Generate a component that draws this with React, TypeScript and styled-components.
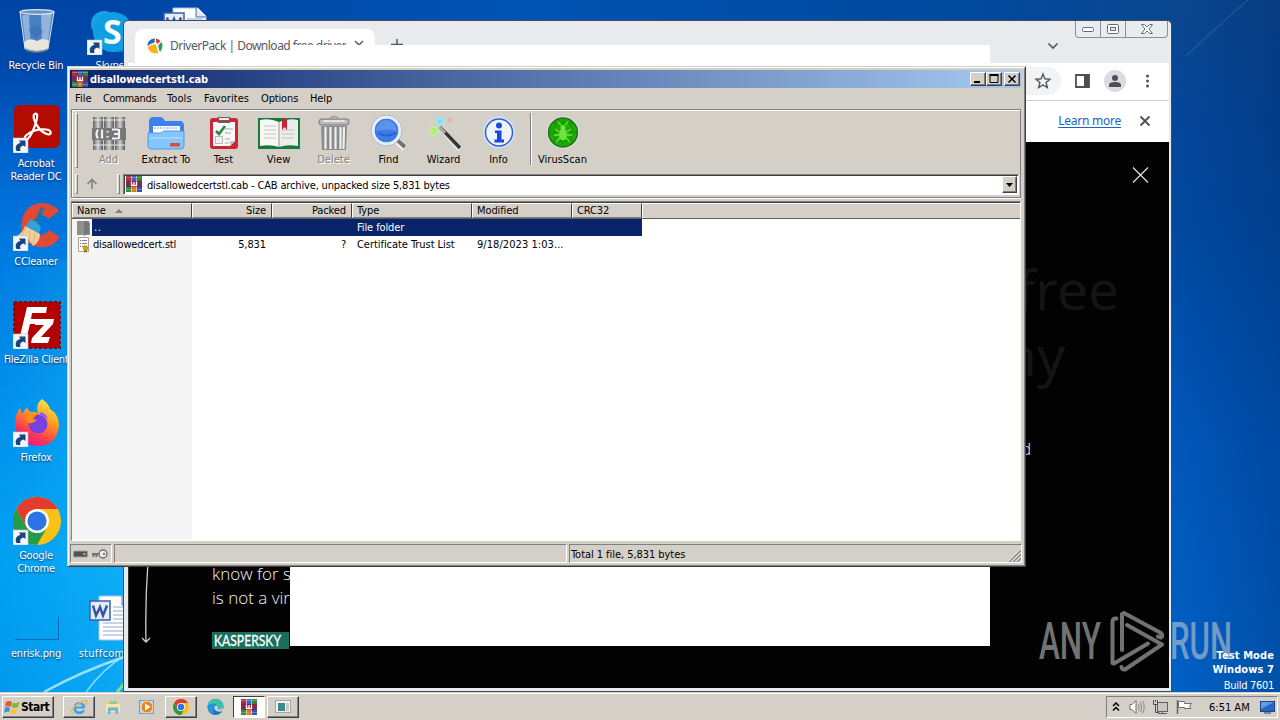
import styled, { createGlobalStyle, css } from "styled-components";
import type { ReactNode } from "react";

const GlobalStyle = createGlobalStyle`
    * {
        box-sizing: border-box;
    }
    body {
        margin: 0;
        overflow: hidden;
        font-family: "DejaVu Sans Condensed", "DejaVu Sans", sans-serif;
        font-size: 11px;
        line-height: 13px;
        color: #000;
    }
    svg {
        display: block;
        flex: none;
    }
`;

const Desktop = styled.div`
    position: relative;
    width: 1280px;
    height: 720px;
    overflow: hidden;
    background:
        linear-gradient(90deg, #0046a6 0, #0053b2 400px, #004a9f 800px, #0a468f 1048px) 124px 0 / 1048px 24px no-repeat,
        linear-gradient(90deg, rgba(0, 30, 80, 0) 1172px, rgba(0, 30, 80, 0.25) 1280px),
        linear-gradient(180deg, #0a468f 0, #04469a 120px, #00499f 220px, #0057bb 440px, #0062c6 700px) right / 108px 100% no-repeat,
        linear-gradient(90deg, rgba(0, 190, 255, 0) 0, rgba(40, 200, 255, 0.35) 130px, rgba(0, 0, 0, 0) 131px) 0 260px no-repeat,
        linear-gradient(180deg, #0045a4 0, #0048ab 60px, #0062cc 150px, #0079df 240px, #0090ec 400px, #02a0f2 560px, #0098ee 700px);
`;

const Rays = styled.svg`
    position: absolute;
    inset: 0;
`;

const IconGrid = styled.div`
    display: grid;
    grid-template-columns: repeat(3, 74px);
    grid-template-rows: repeat(7, 98px);
    padding-top: 7px;
`;

const Shortcut = styled.div<{ $col: number; $row: number }>`
    grid-column: ${(props) => props.$col};
    grid-row: ${(props) => props.$row};
    display: flex;
    flex-direction: column;
    align-items: center;
    gap: 4px;
`;

const ShortcutLabel = styled.span<{ $ls?: number }>`
    padding-right: 2px;
    color: #fff;
    text-align: center;
    white-space: pre;
    letter-spacing: ${(props) => props.$ls ?? -0.2}px;
    text-shadow: 0 1px 2px rgba(0, 20, 60, 0.8);
`;

/* ---------- browser window ---------- */

const BrowserWindow = styled.div`
    position: absolute;
    left: 123px;
    top: 20px;
    width: 1049px;
    height: 672px;
    display: flex;
    flex-direction: column;
    padding: 0 2px 3px 4px;
    border: 1px solid #3d4c5c;
    border-radius: 5px 5px 0 0;
    background: #e8eaed;
    overflow: hidden;
`;

const TabStrip = styled.div`
    display: flex;
    height: 42px;
    padding: 8px 0 0 7px;
    flex: none;
`;

const Tab = styled.div`
    display: flex;
    align-items: flex-start;
    width: 240px;
    height: 34px;
    padding: 9px 11px 0 12px;
    border-radius: 8px 8px 0 0;
    background: #fff;
`;

const TabTitle = styled.span`
    width: 176px;
    margin-left: 7px;
    overflow: hidden;
    white-space: nowrap;
    font-family: "Noto Sans", sans-serif;
    font-size: 12px;
    line-height: 15px;
    letter-spacing: -0.5px;
    color: #55595e;
`;

const TabClose = styled.div`
    margin-left: 8px;
    padding-top: 2px;
`;

const NewTab = styled.div`
    padding: 10px 0 0 16px;
`;

const TabSearch = styled.div`
    margin-left: auto;
    padding: 13px 110px 0 0;
`;

const CaptionButtons = styled.div`
    position: absolute;
    top: 0;
    right: 3px;
    display: flex;
    height: 17px;
    border: 1px solid #8b9097;
    border-top: 0;
    border-radius: 0 0 4px 4px;
    background: #e9ecef;
`;

const CaptionButton = styled.div<{ $w: number }>`
    display: flex;
    align-items: center;
    justify-content: center;
    width: ${(props) => props.$w}px;
    border-right: 1px solid #8b9097;

    &:last-child {
        border-right: 0;
    }
`;

const BrowserToolbar = styled.div`
    display: flex;
    align-items: center;
    justify-content: flex-end;
    height: 38px;
    flex: none;
    padding: 0 13px 2px 0;
    gap: 14px;
    background: #fff;
    border-bottom: 1px solid #cfd1d5;
`;

const Omnibox = styled.div`
    display: flex;
    align-items: center;
    justify-content: flex-end;
    width: 400px;
    height: 28px;
    padding-right: 9px;
    border-radius: 14px;
    background: #f1f3f4;
`;

const Avatar = styled.div`
    display: flex;
    width: 22px;
    height: 22px;
    overflow: hidden;
    border-radius: 11px;
    background: #dadce0;
`;

const InfoBar = styled.div`
    display: flex;
    align-items: center;
    justify-content: flex-end;
    gap: 18px;
    height: 41px;
    flex: none;
    padding: 0 18px 2px 0;
    background: #fff;
    font-family: "Noto Sans", sans-serif;
    font-size: 12px;
`;

const LearnMore = styled.span`
    color: #1a62c5;
    text-decoration: underline;
    text-underline-offset: 2px;
    letter-spacing: -0.25px;
`;

const Page = styled.div`
    flex: 1;
    display: flex;
    flex-direction: column;
    border-left: 1px solid #333;
    background: #020202;
    color: #f2f2f2;
    font-family: "Open Sans", sans-serif;
    font-weight: 300;
`;

const PageClose = styled.div`
    display: flex;
    justify-content: flex-end;
    height: 114px;
    padding: 25px 20px 0 0;
`;

const Headline = styled.div`
    display: flex;
    flex-direction: column;
    align-items: flex-end;
    height: 185px;
    font-family: "Noto Sans", sans-serif;
    font-size: 55px;
    font-weight: 400;
    line-height: 66px;
    color: #141414;
`;

const HeadlineText = styled.span<{ $right: number }>`
    margin-right: ${(props) => props.$right}px;
`;

const Caption = styled.div`
    height: 121px;
    padding-right: 138px;
    text-align: right;
    font-size: 17px;
    line-height: 16px;
`;

const Quote = styled.div`
    display: flex;
    gap: 61px;
    padding-left: 10px;
`;

const QuoteText = styled.div`
    font-size: 17px;
    line-height: 24px;
    white-space: pre;
`;

const Kaspersky = styled.div`
    width: 77px;
    height: 17px;
    margin-top: 22px;
    background: #18705b;
`;

const BlankWindow = styled.div`
    position: absolute;
    left: 290px;
    top: 45px;
    width: 700px;
    height: 601px;
    background: #fff;
`;

/* ---------- archive window ---------- */

const raised = css`
    border: 1px solid;
    border-color: #fff #404040 #404040 #fff;
    box-shadow: inset -1px -1px 0 #808080;
`;

const sunken = css`
    border: 1px solid;
    border-color: #808080 #fff #fff #808080;
`;

const ArchiveWindow = styled.div`
    position: absolute;
    left: 67px;
    top: 66px;
    width: 959px;
    height: 501px;
    display: flex;
    flex-direction: column;
    padding: 3px 3px 3px 2px;
    border: 1px solid;
    border-color: #d4d0c8 #404040 #404040 #d4d0c8;
    background: #d4d0c8;
    box-shadow: inset 1px 1px 0 #fff, inset -1px -1px 0 #808080;
`;

const TitleBar = styled.div`
    display: flex;
    align-items: center;
    height: 18px;
    flex: none;
    padding: 0 2px 0 2px;
    background: linear-gradient(90deg, #0a246a, #a6caf0);
    color: #fff;
    font-weight: bold;
`;

const TitleText = styled.span`
    flex: 1;
    padding-left: 2px;
    letter-spacing: -0.05px;
`;

const TitleButton = styled.div<{ $gap?: number }>`
    ${raised}
    display: flex;
    align-items: center;
    justify-content: center;
    width: 16px;
    height: 14px;
    margin-left: ${(props) => props.$gap ?? 0}px;
    background: #d4d0c8;
`;

const MenuBar = styled.div`
    display: flex;
    height: 21px;
    flex: none;
    padding: 4px 0 0 5px;
`;

const MenuItem = styled.span<{ $w: number; $ls?: number }>`
    width: ${(props) => props.$w}px;
    letter-spacing: ${(props) => props.$ls ?? 0}px;
    white-space: nowrap;
`;

const Rebar = styled.div`
    display: flex;
    flex-direction: column;
    height: 89px;
    flex: none;
    margin: 0 1px 0 1px;
    border: 1px solid #808080;
    box-shadow: inset 1px 1px 0 #fff, 0 1px 0 #fff;
`;

const ButtonBand = styled.div`
    display: flex;
    height: 62px;
    padding: 3px 0 0 3px;
`;

const Gripper = styled.div<{ $h: number; $right: number }>`
    width: 3px;
    height: ${(props) => props.$h}px;
    margin-right: ${(props) => props.$right}px;
    border: 1px solid;
    border-color: #fff #808080 #808080 #fff;
`;

const ToolButton = styled.div<{ $w?: number; $disabled?: boolean }>`
    display: flex;
    flex-direction: column;
    align-items: center;
    width: ${(props) => props.$w ?? 55}px;
    white-space: nowrap;
    padding-top: 1px;
    gap: 1px;
    color: ${(props) => (props.$disabled ? "#808080" : "#000")};
    text-shadow: ${(props) => (props.$disabled ? "1px 1px 0 #fff" : "none")};
`;

const ToolSeparator = styled.div`
    width: 2px;
    height: 52px;
    margin: 0 3px 0 4px;
    border-left: 1px solid #808080;
    border-right: 1px solid #fff;
`;

const AddressBand = styled.div`
    display: flex;
    height: 25px;
    padding: 2px 1px 0 3px;
`;

const UpArrow = styled.div`
    width: 36px;
    padding: 4px 0 0 5px;
`;

const AddressBox = styled.div`
    ${sunken}
    display: flex;
    flex: 1;
    height: 21px;
    padding: 1px 1px 1px 2px;
    background: #fff;
    box-shadow: inset 1px 1px 0 #404040;
`;

const AddressText = styled.span`
    flex: 1;
    padding: 3px 0 0 5px;
    letter-spacing: -0.16px;
`;

const DropButton = styled.div`
    ${raised}
    display: flex;
    align-items: center;
    justify-content: center;
    width: 15px;
    height: 17px;
    background: #d4d0c8;
`;

const FileList = styled.div`
    ${sunken}
    display: flex;
    flex-direction: column;
    flex: 1;
    margin: 3px 1px 0 1px;
    box-shadow: inset 0 1px 0 #404040;
    padding-top: 1px;
    background: linear-gradient(90deg, #f5f5f5 120px, #fff 120px);
`;

const HeaderRow = styled.div`
    display: flex;
    height: 16px;
    background: #d4d0c8;
    border-bottom: 1px solid #606060;
`;

const HeaderCell = styled.div<{ $w: number; $end?: boolean }>`
    display: flex;
    align-items: center;
    justify-content: ${(props) => (props.$end ? "flex-end" : "flex-start")};
    gap: 9px;
    width: ${(props) => props.$w}px;
    padding: 0 5px 0 4px;
    letter-spacing: -0.1px;
    border: 1px solid;
    border-color: #fff #404040 #808080 #fff;
`;

const HeaderFill = styled.div`
    flex: 1;
    border-top: 1px solid #fff;
    border-left: 1px solid #fff;
`;

const FileRow = styled.div<{ $selected?: boolean }>`
    display: flex;
    width: 570px;
    height: 17px;
    color: ${(props) => (props.$selected ? "#fff" : "#000")};
    background: ${(props) => (props.$selected ? "linear-gradient(90deg, transparent 20px, #0a246a 20px)" : "none")};
`;

const FileCell = styled.div<{ $w: number; $end?: boolean; $ls?: number }>`
    display: flex;
    align-items: center;
    justify-content: ${(props) => (props.$end ? "flex-end" : "flex-start")};
    gap: 1px;
    width: ${(props) => props.$w}px;
    padding: 0 6px 0 5px;
    white-space: nowrap;
    letter-spacing: ${(props) => props.$ls ?? -0.2}px;
`;

const StatusBar = styled.div`
    display: flex;
    gap: 2px;
    height: 22px;
    flex: none;
    padding-top: 3px;
`;

const StatusPane = styled.div<{ $w?: number }>`
    ${sunken}
    display: flex;
    align-items: center;
    gap: 3px;
    width: ${(props) => (props.$w ? `${props.$w}px` : "auto")};
    flex: ${(props) => (props.$w ? "none" : 1)};
    padding: 1px 0 0 1px;
    letter-spacing: -0.05px;
`;

const ResizeGrip = styled.svg`
    margin-left: auto;
    align-self: flex-end;
`;

/* ---------- taskbar ---------- */

const Taskbar = styled.div`
    position: absolute;
    left: 0;
    right: 0;
    bottom: 0;
    height: 28px;
    display: flex;
    padding: 3px 2px 2px 2px;
    background: #d4d0c8;
    border-top: 1px solid #d4d0c8;
    box-shadow: inset 0 1px 0 #fff;
`;

const StartButton = styled.div`
    ${raised}
    display: flex;
    align-items: center;
    gap: 1px;
    width: 52px;
    height: 22px;
    padding-left: 1px;
    margin-right: 9px;
    font-weight: bold;
    font-size: 12px;
    letter-spacing: -0.5px;
`;

const TaskButton = styled.div<{ $state?: "open" | "active" }>`
    display: flex;
    align-items: center;
    justify-content: center;
    width: 32px;
    height: 22px;
    margin-right: 2px;
    ${(props) => props.$state === "open" && raised}
    ${(props) =>
        props.$state === "active" &&
        css`
            border: 1px solid;
            border-color: #404040 #fff #fff #404040;
            background: #fff;
        `}
`;

const Tray = styled.div`
    ${sunken}
    display: flex;
    align-items: center;
    width: 172px;
    height: 22px;
    margin-left: auto;
    padding-left: 5px;
`;

const Clock = styled.span`
    margin: 0 10px 0 15px;
    white-space: nowrap;
    letter-spacing: 0;
`;

const BuildInfo = styled.div`
    position: absolute;
    right: 6px;
    bottom: 26px;
    text-align: right;
    color: #fff;
    line-height: 14px;
    letter-spacing: 0.1px;

    b {
        display: block;
    }
    span {
        display: block;
        line-height: 17px;
        letter-spacing: -0.3px;
    }
`;

const Watermark = styled.svg`
    position: absolute;
    left: 1036px;
    top: 606px;
`;

/* ---------- drawings ---------- */

function Arrow() {
    return (
        <g transform="translate(0 33)">
            <rect width="15" height="15" fill="#f4f6f8" stroke="#b9c3cc" strokeWidth=".6" />
            <path d="M3.500 13C1.500 9 3.500 5.500 7.500 5L6 2.500H12.500V9L10.500 7.500C7.500 8 6.500 10 7.500 13Z" fill="#1b4380" />
        </g>
    );
}

function Icon48({ children, link }: { children: ReactNode; link?: boolean }) {
    return (
        <svg width="48" height="48" viewBox="0 0 48 48">
            {children}
            {link && <Arrow />}
        </svg>
    );
}

function RecycleBin() {
    return (
        <Icon48>
            <path d="M7 5L12 42Q24 48 35 42L41 5Z" fill="#8fb7dc" fillOpacity=".5" stroke="#d6e6f2" strokeWidth="1" />
            <path d="M28 6L39 6L34 42L29 43Z" fill="#dceaf6" fillOpacity=".5" />
            <path d="M9 8L16 8L18 42L13 41Z" fill="#cfe3f4" fillOpacity=".5" />
            <path d="M15 22L25 18L31 25L22 31Z" fill="#245fae" fillOpacity=".3" />
            <path d="M11 35Q17 30 24 34Q30 30 36 34L35 41Q24 47 12 41Z" fill="#e9e6de" />
            <ellipse cx="24" cy="5" rx="17" ry="2.300" fill="#6894c4" stroke="#dbe5ee" strokeWidth="1.200" />
            <path d="M12 42Q24 47 35 42L34 44Q24 48 13 44Z" fill="#596c7c" />
        </Icon48>
    );
}

function Acrobat() {
    return (
        <Icon48 link>
            <rect x="1" y="0" width="46" height="43" rx="6" fill="#b30b00" />
            <path
                d="M23 8.500C18.500 8.500 21 17 25 22C28 26 32 29 35.500 29.500C39 29.500 38.500 25 33 24.500C26 24 18 26.500 13.500 30C9.500 33.500 13 36 16 32.500C20 27.500 27 9 23 8.500Z"
                fill="none"
                stroke="#fff"
                strokeWidth="2.200"
            />
        </Icon48>
    );
}

function CCleaner() {
    return (
        <Icon48 link>
            <path d="M46 8L36 16Q27 8 21 17Q16 28 25 32Q32 33 36 27L47 34Q40 46 25 44Q8 40 8 22Q10 2 28 0Q40 0 46 8Z" fill="#df4936" />
            <path d="M28 4L31 5L25 24L20 22Z" fill="#1876ab" />
            <path d="M17 17Q24 17 28 25L25 32L12 24Z" fill="#35a0d6" />
            <path d="M12 23L27 31Q27 39 20 43L14 34L2 34Q10 30 12 23Z" fill="#f0cf9a" />
            <path d="M12 25L8 34M17 27L16 40M22 30L20 42" stroke="#dcb478" strokeWidth="1" />
        </Icon48>
    );
}

function FileZilla() {
    return (
        <Icon48 link>
            <rect x="1" y="1" width="46" height="46" fill="#b30000" stroke="#7e0b0b" strokeWidth="2" strokeDasharray="3 2" />
            <path d="M14 6H34L33 12H19L18 18H27L26 23H17L14 35H7Z" fill="#fff" />
            <path d="M23 18H41L40 23L28 36H37L35 42H18L19 37L31 24H22Z" fill="#fff" />
        </Icon48>
    );
}

function Firefox() {
    return (
        <Icon48 link>
            <defs>
                <linearGradient id="fx" x1=".8" y1="0" x2=".3" y2="1">
                    <stop offset="0" stopColor="#fff04a" />
                    <stop offset=".4" stopColor="#ff9a20" />
                    <stop offset=".75" stopColor="#ff3850" />
                    <stop offset="1" stopColor="#e01590" />
                </linearGradient>
            </defs>
            <path
                d="M29 0Q36 5 37 10Q46 15 46 27Q44 46 25 47Q4 46 2 25Q2 16 7 9L9 15L14 8Q15 13 19 13Q23 12 25 15Q22 5 29 0Z"
                fill="url(#fx)"
            />
            <circle cx="25" cy="25" r="9.500" fill="#7a3fe0" />
            <path d="M12 19Q20 14 27 14Q21 17 20 20L24 21Q19 26 14 23Z" fill="#ff8a16" />
            <path d="M27 13Q34 14 35 21Q32 16 27 17Z" fill="#9059ff" />
        </Icon48>
    );
}

const chromeShape = (
    <>
        <circle cx="24" cy="24" r="24" fill="#fbc116" />
        <path d="M3.200 12A24 24 0 0 1 44.800 12H24L13.600 30Z" fill="#e33b2e" />
        <path d="M3.200 12A24 24 0 0 0 24 48L34.400 30H13.600Z" fill="#259a47" />
        <circle cx="24" cy="24" r="12" fill="#fff" />
        <circle cx="24" cy="24" r="9.600" fill="#2e72e8" />
    </>
);

function ChromeMark({ size }: { size: number }) {
    return (
        <svg width={size} height={size} viewBox="0 0 48 48">
            {chromeShape}
        </svg>
    );
}

function Skype() {
    return (
        <Icon48 link>
            <circle cx="17" cy="17" r="13" fill="#1aa0e6" />
            <circle cx="33" cy="32" r="13" fill="#0b7ed0" />
            <circle cx="26" cy="25" r="20" fill="#0c9fe2" />
            <text x="16" y="37" fontFamily="Open Sans, sans-serif" fontSize="34" fontWeight="700" fill="#fff">
                S
            </text>
        </Icon48>
    );
}

function WordDoc() {
    return (
        <Icon48>
            <path d="M12 1H37L45 9V45H12Z" fill="#fff" stroke="#a9bfdf" strokeWidth="1" />
            <path d="M35 1V10H45" fill="#dfe8f5" stroke="#456fb3" strokeWidth="1" />
            <path d="M16 28H42M16 32H42M16 36H42M16 40H42M26 12H42M26 16H42M26 20H42M26 24H42" stroke="#8ba6d6" />
            <rect x="3" y="6" width="20" height="19" fill="#e6ecf7" stroke="#3a5fae" strokeWidth="1.500" />
            <path d="M6 10.500L9 20.500L13 12L16 20.500L20 10.500" fill="none" stroke="#3554a8" strokeWidth="2.500" />
        </Icon48>
    );
}

function ThinImage() {
    return (
        <Icon48>
            <path d="M2 44.500H45.500V22" fill="none" stroke="#0a6ab5" />
            <circle cx="27" cy="34" r="1" fill="#1586cf" />
        </Icon48>
    );
}

function Books({ size }: { size: number }) {
    return (
        <svg width={size} height={size} viewBox="0 0 16 16">
            <rect width="5" height="5" fill="#b02a45" />
            <rect x="5.500" width="5" height="5" fill="#3f62c4" />
            <rect x="11" width="5" height="5" fill="#2b8a3c" />
            <rect y="5" width="16" height="6" fill="#7a2c4e" />
            <rect y="11" width="5" height="5" fill="#2b8f45" />
            <rect x="5.500" y="11" width="5" height="5" fill="#e0761c" />
            <rect x="11" y="11" width="5" height="5" fill="#2f55bd" />
            <path d="M0 1.500H16M0 13.500H16" stroke="#d9c48a" strokeWidth=".6" opacity=".7" />
            <rect x="4.500" y="5" width="7" height="6" fill="#8a1f2b" />
            <path d="M5.500 5.500V9.500H10.500V5.500M8 6V9" fill="none" stroke="#fff" strokeWidth="1.300" />
        </svg>
    );
}

function ToolIcon({ children }: { children: ReactNode }) {
    return (
        <svg width="42" height="38" viewBox="0 0 42 38">
            {children}
        </svg>
    );
}

const addIcon = (
    <ToolIcon>
        <defs>
            <linearGradient id="gr">
                <stop offset="0" stopColor="#606060" />
                <stop offset=".5" stopColor="#d0d0d0" />
                <stop offset="1" stopColor="#585858" />
            </linearGradient>
        </defs>
        <rect x="5" y="3" width="10" height="33" fill="url(#gr)" />
        <rect x="16" y="3" width="10" height="33" fill="url(#gr)" />
        <rect x="27" y="3" width="10" height="33" fill="url(#gr)" />
        <path d="M5 6H37M5 31H37" stroke="#eee" strokeWidth="1.500" opacity=".6" />
        <rect x="4" y="14" width="34" height="12" fill="#777" />
        <path d="M10 15.500Q7 20 10 24.500M14 15.500V24.500M30 15.500H24M30 24.500H24M31 15V25M26 20H31M19.500 17V18.500M19.500 22V23.500" stroke="#f0f0f0" strokeWidth="2.200" fill="none" />
    </ToolIcon>
);

const extractIcon = (
    <ToolIcon>
        <path d="M4 8Q4 3 8 3H15Q18 3 20 7H36Q39 8 39 12V32H4Z" fill="#3f7ff0" />
        <rect x="8" y="12" width="27" height="14" fill="#fff" />
        <path d="M10 13V15M13 13V15M16 13V15M19 13V15M22 13V15M25 13V15M28 13V15M31 13V15" stroke="#7d9cc9" />
        <path d="M3 19H16L19 17H39V32Q39 35 36 35H7Q3 35 3 32Z" fill="#82c7ff" stroke="#4b9aee" />
        <path d="M4 24H38" stroke="#b5e0ff" />
        <rect x="25" y="29" width="10" height="3.500" fill="#e2483d" />
    </ToolIcon>
);

const testIcon = (
    <ToolIcon>
        <rect x="7" y="4" width="28" height="31" rx="3" fill="#cf2338" />
        <path d="M10 8H32V27L27 32H10Z" fill="#f8f8f8" />
        <path d="M27 32V27H32Z" fill="#c5c5c5" />
        <rect x="14" y="3" width="14" height="6" rx="2" fill="#8e4a52" />
        <rect x="16" y="4" width="10" height="2" fill="#ececec" />
        <path d="M13 17L16 20L22 12" fill="none" stroke="#24883b" strokeWidth="2.500" />
        <path d="M22 15H30M22 19H28M22 25H27M22 29H26" stroke="#a9a9a9" />
        <rect x="12.500" y="22.500" width="7" height="7" fill="#eee" stroke="#bbb" />
    </ToolIcon>
);

const viewIcon = (
    <ToolIcon>
        <rect x="0" y="4" width="42" height="31" fill="#157a3c" />
        <path d="M2 6Q12 4 21 8V33Q12 30 2 32Z" fill="#f7f7f5" />
        <path d="M40 6Q30 4 21 8V33Q30 30 40 32Z" fill="#ececea" />
        <path d="M6 12H18M6 16H18M6 20H18M6 24H18M24 20H36M24 24H36M24 16H36" stroke="#c2c2c2" />
        <path d="M21 8V33" stroke="#999" />
        <path d="M24 5H29V16L26.500 13L24 16Z" fill="#c82136" />
    </ToolIcon>
);

const deleteIcon = (
    <ToolIcon>
        <path d="M17 4Q21 1 25 4" fill="none" stroke="#999" strokeWidth="1.500" />
        <rect x="6" y="5" width="30" height="6" rx="2.500" fill="#b9b9b9" stroke="#777" />
        <path d="M8 12H34L33 36H9Z" fill="#8c8c8c" />
        <path d="M12.500 13V35M17.500 13V35M22.500 13V35M27.500 13V35M31 13L30.500 35" stroke="#eee" strokeWidth="2.200" />
        <path d="M10 7H32" stroke="#f2f2f2" strokeWidth="1.500" />
    </ToolIcon>
);

const findIcon = (
    <ToolIcon>
        <path d="M27 25L37 34" stroke="#f2f2f2" strokeWidth="7" />
        <path d="M28 25L37 33" stroke="#6d7378" strokeWidth="4" />
        <circle cx="18.500" cy="16.500" r="13.500" fill="#2c62d2" stroke="#e6edf6" strokeWidth="3.500" />
        <circle cx="18.500" cy="16.500" r="15.500" fill="none" stroke="#88a2c4" strokeWidth=".6" />
        <circle cx="18.500" cy="16.500" r="11.500" fill="#3f7de6" />
        <path d="M8 17Q18 14 29 17Q27 6 18 6Q9 7 8 17Z" fill="#5b93ec" />
        <path d="M10 19Q18 24 28 19" stroke="#2f5fd0" strokeWidth="2" fill="none" />
    </ToolIcon>
);

const wizardIcon = (
    <ToolIcon>
        <path d="M18 14L37 35" stroke="#eee" strokeWidth="5" />
        <path d="M17 13L37 34" stroke="#353535" strokeWidth="3.500" />
        <path d="M17 13L22 19" stroke="#aaa" strokeWidth="3" />
        <circle cx="11" cy="17" r="6" fill="#c6f39d" opacity=".5" />
        <circle cx="11" cy="17" r="3" fill="#abf56a" />
        <circle cx="17" cy="7" r="5" fill="#9ae9f2" opacity=".6" />
        <circle cx="17" cy="7" r="2.500" fill="#79e2f2" />
        <circle cx="27" cy="6" r="2.500" fill="#eaa8b0" opacity=".7" />
    </ToolIcon>
);

const infoIcon = (
    <ToolIcon>
        <circle cx="21" cy="18.500" r="16" fill="#dbe8fa" stroke="#c3d7f5" />
        <circle cx="21" cy="18.500" r="13.500" fill="#eef4ff" stroke="#315dc2" strokeWidth="1.500" />
        <circle cx="21" cy="11.500" r="3" fill="#1c49d4" />
        <path d="M17 16.500H23.500V25.500H26V28.500H16.500V25.500H19V19H17Z" fill="#1c49d4" />
    </ToolIcon>
);

const virusIcon = (
    <ToolIcon>
        <circle cx="21" cy="18.500" r="16" fill="#eee" />
        <circle cx="21" cy="18.500" r="14.500" fill="#1dab0a" stroke="#26701d" strokeWidth="1.500" />
        <path d="M7 18H35M21 4V32M11 9H31M11 27H31M13 7V29M29 7V29" stroke="#139005" />
        <ellipse cx="21" cy="20.500" rx="4" ry="6" fill="#6fe340" />
        <circle cx="21" cy="13.500" r="2.500" fill="#6fe340" />
        <path d="M19 11L16 8M23 11L26 8M17 18L13 15M25 18L29 15M17 21H12M25 21H30M18 24L14 28M24 24L28 28" stroke="#6fe340" strokeWidth="1.300" />
    </ToolIcon>
);

const tools = [
    { label: "Add", icon: addIcon, disabled: true },
    { label: "Extract To", icon: extractIcon, w: 60 },
    { label: "Test", icon: testIcon },
    { label: "View", icon: viewIcon },
    { label: "Delete", icon: deleteIcon, disabled: true },
    { label: "Find", icon: findIcon },
    { label: "Wizard", icon: wizardIcon },
    { label: "Info", icon: infoIcon },
];

const menus = [
    { label: "File", w: 28 },
    { label: "Commands", w: 64, ls: -0.35 },
    { label: "Tools", w: 37, ls: 0.1 },
    { label: "Favorites", w: 57, ls: 0.05 },
    { label: "Options", w: 49, ls: -0.15 },
    { label: "Help", w: 40, ls: -0.1 },
];

const shortcuts = [
    { label: "Recycle Bin", icon: <RecycleBin />, col: 1, row: 1 },
    { label: "Acrobat\nReader DC", icon: <Acrobat />, col: 1, row: 2 },
    { label: "CCleaner", icon: <CCleaner />, col: 1, row: 3 },
    { label: "FileZilla Client", icon: <FileZilla />, col: 1, row: 4, ls: -0.3 },
    { label: "Firefox", icon: <Firefox />, col: 1, row: 5 },
    { label: "Google\nChrome", icon: <Icon48 link>{chromeShape}</Icon48>, col: 1, row: 6 },
    { label: "enrisk.png", icon: <ThinImage />, col: 1, row: 7 },
    { label: "Skype", icon: <Skype />, col: 2, row: 1 },
    { label: "stuffcomp...", icon: <WordDoc />, col: 2, row: 7, ls: 0.3 },
    { label: "", icon: <WordDoc />, col: 3, row: 1 },
];

function Browser() {
    return (
        <BrowserWindow>
            <TabStrip>
                <Tab>
                    <svg width="16" height="16" viewBox="0 0 16 16">
                        <path d="M0.500 7Q1 1 8 0.500L7.500 4.500Q4 5 0.500 8Z" fill="#1d6fb8" />
                        <path d="M9 0.500Q12 1 13.500 3L10.500 6L9 4Z" fill="#d83a2e" />
                        <path d="M14.500 4Q17 9 13 14Q11 11 11.500 7Z" fill="#29a04b" />
                        <path d="M0.500 9.500Q5 5.500 9 6.500Q10 11 11.500 15Q4 17 0.500 9.500Z" fill="#f6b21b" />
                    </svg>
                    <TabTitle>DriverPack | Download free driver u</TabTitle>
                    <TabClose>
                        <svg width="10" height="10" viewBox="0 0 10 10">
                            <path d="M1 1L9 9M9 1L1 9" stroke="#55595e" strokeWidth="1.500" />
                        </svg>
                    </TabClose>
                </Tab>
                <NewTab>
                    <svg width="12" height="12" viewBox="0 0 12 12">
                        <path d="M6 0V12M0 5.500H12" stroke="#55595e" strokeWidth="1.500" />
                    </svg>
                </NewTab>
                <TabSearch>
                    <svg width="12" height="8" viewBox="0 0 12 8">
                        <path d="M1.500 1.500L6 6L10.500 1.500" fill="none" stroke="#55595e" strokeWidth="1.700" />
                    </svg>
                </TabSearch>
            </TabStrip>
            <CaptionButtons>
                <CaptionButton $w={25}>
                    <svg width="13" height="6" viewBox="0 0 13 6">
                        <rect x=".5" y="1.500" width="11" height="4" rx="1" fill="#fff" stroke="#666c75" />
                    </svg>
                </CaptionButton>
                <CaptionButton $w={25}>
                    <svg width="12" height="10" viewBox="0 0 12 10">
                        <rect x=".5" y=".5" width="11" height="9" rx="1" fill="#fff" stroke="#666c75" />
                        <rect x="3.500" y="3.500" width="5" height="3" fill="#e9ecef" stroke="#666c75" />
                    </svg>
                </CaptionButton>
                <CaptionButton $w={41}>
                    <svg width="12" height="10" viewBox="0 0 12 10">
                        <path
                            d="M.5 .5H3.500L6 3L8.500 .5H11.500L8 5L11.500 9.500H8.500L6 7L3.500 9.500H.5L4 5Z"
                            fill="#fff"
                            stroke="#666c75"
                        />
                    </svg>
                </CaptionButton>
            </CaptionButtons>
            <BrowserToolbar>
                <Omnibox>
                    <svg width="18" height="18" viewBox="0 0 18 18">
                        <path
                            d="M9 2L10.900 6.800L16 7.200L12.100 10.500L13.300 15.500L9 12.800L4.700 15.500L5.900 10.500L2 7.200L7.100 6.800Z"
                            fill="none"
                            stroke="#55595e"
                            strokeWidth="1.400"
                        />
                    </svg>
                </Omnibox>
                <svg width="15" height="14" viewBox="0 0 15 14">
                    <path d="M1 1H14V13H1Z" fill="none" stroke="#4c5055" strokeWidth="1.800" />
                    <rect x="9" y="1" width="5" height="12" fill="#4c5055" />
                </svg>
                <Avatar>
                    <svg width="22" height="22" viewBox="0 0 22 22">
                        <circle cx="11" cy="8" r="3" fill="#4c5158" />
                        <path d="M5 17V15Q5 12 11 12Q17 12 17 15V17Z" fill="#4c5158" />
                    </svg>
                </Avatar>
                <svg width="16" height="16" viewBox="0 0 16 16" fill="#4c5055">
                    <circle cx="7.500" cy="3" r="1.500" />
                    <circle cx="7.500" cy="8" r="1.500" />
                    <circle cx="7.500" cy="13" r="1.500" />
                </svg>
            </BrowserToolbar>
            <InfoBar>
                <LearnMore>Learn more</LearnMore>
                <svg width="12" height="12" viewBox="0 0 12 12">
                    <path d="M1.500 1.500L10.500 10.500M10.500 1.500L1.500 10.500" stroke="#4c5055" strokeWidth="1.800" />
                </svg>
            </InfoBar>
            <Page>
                <PageClose>
                    <svg width="17" height="16" viewBox="0 0 17 16">
                        <path d="M1 .5L16 15.500M16 .5L1 15.500" stroke="#e4e4e4" strokeWidth="1.200" />
                    </svg>
                </PageClose>
                <Headline>
                    <HeadlineText $right={50}>free</HeadlineText>
                    <HeadlineText $right={104}>any</HeadlineText>
                </Headline>
                <Caption>d</Caption>
                <Quote>
                    <svg width="12" height="84" viewBox="0 0 12 84">
                        <path d="M9 0Q6 40 7 80M3 76L7 80L11 76" fill="none" stroke="#cfcfcf" strokeWidth="1.300" />
                    </svg>
                    <QuoteText>
                        {"know for sure it\nis not a virus"}
                        <Kaspersky>
                            <svg width="77" height="17" viewBox="0 0 77 17">
                                <text
                                    x="2"
                                    y="13.500"
                                    textLength="67"
                                    lengthAdjust="spacingAndGlyphs"
                                    fontFamily="Lato, sans-serif"
                                    fontSize="15"
                                    fontWeight="400"
                                    fill="#fff"
                                    stroke="#fff"
                                    strokeWidth=".3"
                                >
                                    KASPERSKY
                                </text>
                            </svg>
                        </Kaspersky>
                    </QuoteText>
                </Quote>
            </Page>
        </BrowserWindow>
    );
}

function Archive() {
    return (
        <ArchiveWindow>
            <TitleBar>
                <Books size={16} />
                <TitleText>disallowedcertstl.cab</TitleText>
                <TitleButton>
                    <svg width="12" height="10" viewBox="0 0 12 10">
                        <rect x="2" y="7" width="6" height="2" />
                    </svg>
                </TitleButton>
                <TitleButton>
                    <svg width="12" height="10" viewBox="0 0 12 10">
                        <path d="M2 1.500H10V8.500H2Z" fill="none" stroke="#000" />
                        <rect x="1.500" y="0" width="9" height="2" />
                    </svg>
                </TitleButton>
                <TitleButton $gap={2}>
                    <svg width="12" height="10" viewBox="0 0 12 10">
                        <path d="M2.500 1.500L9.500 8.500M9.500 1.500L2.500 8.500" stroke="#000" strokeWidth="1.500" />
                    </svg>
                </TitleButton>
            </TitleBar>
            <MenuBar>
                {menus.map((menu) => (
                    <MenuItem key={menu.label} $w={menu.w} $ls={menu.ls}>
                        {menu.label}
                    </MenuItem>
                ))}
            </MenuBar>
            <Rebar>
                <ButtonBand>
                    <Gripper $h={55} $right={3} />
                    {tools.map((tool) => (
                        <ToolButton key={tool.label} $w={tool.w} $disabled={tool.disabled}>
                            {tool.icon}
                            {tool.label}
                        </ToolButton>
                    ))}
                    <ToolSeparator />
                    <ToolButton>
                        {virusIcon}
                        VirusScan
                    </ToolButton>
                </ButtonBand>
                <AddressBand>
                    <Gripper $h={20} $right={3} />
                    <UpArrow>
                        <svg width="12" height="12" viewBox="0 0 12 12">
                            <path d="M6 11V2M1.500 6L6 1.500L10.500 6" fill="none" stroke="#808080" strokeWidth="1.600" />
                        </svg>
                    </UpArrow>
                    <Gripper $h={20} $right={3} />
                    <AddressBox>
                        <Books size={16} />
                        <AddressText>disallowedcertstl.cab - CAB archive, unpacked size 5,831 bytes</AddressText>
                        <DropButton>
                            <svg width="7" height="4" viewBox="0 0 7 4">
                                <path d="M0 0H7L3.500 4Z" />
                            </svg>
                        </DropButton>
                    </AddressBox>
                </AddressBand>
            </Rebar>
            <FileList>
                <HeaderRow>
                    <HeaderCell $w={120}>
                        Name
                        <svg width="8" height="4" viewBox="0 0 8 4">
                            <path d="M0 4L4 0L8 4Z" fill="#808080" />
                        </svg>
                    </HeaderCell>
                    <HeaderCell $w={80} $end>
                        Size
                    </HeaderCell>
                    <HeaderCell $w={80} $end>
                        Packed
                    </HeaderCell>
                    <HeaderCell $w={120}>Type</HeaderCell>
                    <HeaderCell $w={100}>Modified</HeaderCell>
                    <HeaderCell $w={70}>CRC32</HeaderCell>
                    <HeaderFill />
                </HeaderRow>
                <FileRow $selected>
                    <FileCell $w={120} $ls={0.6}>
                        <svg width="16" height="16" viewBox="0 0 16 16">
                            <path d="M0 1H9L13 3V15H0Z" fill="#8b918f" />
                            <path d="M7 1H12V13L7 16Z" fill="#737a79" />
                        </svg>
                        ..
                    </FileCell>
                    <FileCell $w={80} />
                    <FileCell $w={80} />
                    <FileCell $w={120} $ls={-0.1}>
                        File folder
                    </FileCell>
                </FileRow>
                <FileRow>
                    <FileCell $w={120} $ls={-0.2}>
                        <svg width="15" height="16" viewBox="0 0 15 16">
                            <path d="M1.500 .5H11.500V14.500H1.500Z" fill="#fff" stroke="#b0a084" />
                            <path d="M5 3.500H10M5 6.500H10M5 9.500H8" stroke="#7482a8" />
                            <path d="M3 3.500H4M3 6.500H4M3 9.500H4" stroke="#c05a4a" />
                            <circle cx="8.500" cy="11" r="2.700" fill="#c9a21a" />
                            <path d="M7 13V16L8.500 14.500L10 16V13Z" fill="#8f7610" />
                        </svg>
                        disallowedcert.stl
                    </FileCell>
                    <FileCell $w={80} $end $ls={-0.1}>
                        5,831
                    </FileCell>
                    <FileCell $w={80} $end>
                        ?
                    </FileCell>
                    <FileCell $w={120} $ls={-0.05}>
                        Certificate Trust List
                    </FileCell>
                    <FileCell $w={100} $ls={0.06}>
                        9/18/2023 1:03...
                    </FileCell>
                </FileRow>
            </FileList>
            <StatusBar>
                <StatusPane $w={42}>
                    <svg width="16" height="8" viewBox="0 0 16 8">
                        <rect x="1.500" y="1" width="14" height="6" rx="1" fill="#4d5254" stroke="#a3a3a3" />
                        <rect x="11" y="3" width="3" height="2" fill="#7fa888" />
                    </svg>
                    <svg width="17" height="12" viewBox="0 0 17 12">
                        <path d="M1 6H9M2.500 6V9M5.500 6V9" stroke="#707070" strokeWidth="1.800" />
                        <circle cx="12" cy="6" r="4" fill="#efefef" stroke="#707070" strokeWidth="1.400" />
                        <circle cx="13" cy="6" r="1.300" fill="#808080" />
                    </svg>
                </StatusPane>
                <StatusPane $w={453} />
                <StatusPane>
                    Total 1 file, 5,831 bytes
                    <ResizeGrip width="13" height="13" viewBox="0 0 13 13">
                        <path d="M1 13L13 1M5 13L13 5M9 13L13 9" stroke="#808080" strokeWidth="1.500" />
                        <path d="M0 12.500L12.500 0M4 12.500L12.500 4M8 12.500L12.500 8" stroke="#fff" strokeWidth=".8" />
                    </ResizeGrip>
                </StatusPane>
            </StatusBar>
        </ArchiveWindow>
    );
}

function Bar() {
    return (
        <Taskbar>
            <StartButton>
                <svg width="16" height="16" viewBox="0 0 16 16">
                    <path d="M2 3Q5 1 8 3L6.500 8Q4 6 1 8Z" fill="#e8562a" />
                    <path d="M9 3.500Q12 5 15.500 3L14 8Q11 10 7.500 8Z" fill="#7bbb3c" />
                    <path d="M1 9Q3 7 6 9L5 13Q2 12 0 14Z" fill="#3e8fdc" />
                    <path d="M7.500 9.500Q10 11 13.500 9.500L12 14Q9 16 6 14Z" fill="#f7c52b" />
                </svg>
                Start
            </StartButton>
            <TaskButton $state="open">
                <svg width="18" height="16" viewBox="0 0 18 16">
                    <path d="M15 9.500H6Q6.500 12.500 9.500 12.500Q11.500 12.500 12.200 11.200H15Q13.500 15.300 9.300 15.300Q3.500 15 3.500 9Q4 3 9.500 3Q15.500 3.500 15 9.500Z" fill="#3ca2e4" />
                    <path d="M6.200 7.500H12.300Q12 5.200 9.300 5.200Q6.800 5.200 6.200 7.500Z" fill="#d4d0c8" />
                    <path d="M2.500 15Q-1 11 8 5Q16 0 17 2Q17.500 4 15 6" fill="none" stroke="#e6bd3c" strokeWidth="1.300" />
                </svg>
            </TaskButton>
            <TaskButton>
                <svg width="16" height="16" viewBox="0 0 16 16">
                    <path d="M1 2H6L8 4H14V12H1Z" fill="#e8cf78" />
                    <path d="M5 2H12V5H5Z" fill="#9cc68a" />
                    <path d="M1 5H15V13H1Z" fill="#f6e7a4" />
                    <path d="M3 9.500Q3 8.500 4 8.500H12Q13 8.500 13 9.500V15H10.500V11.500H5.500V15H3Z" fill="#69b3dc" />
                </svg>
            </TaskButton>
            <TaskButton>
                <svg width="17" height="16" viewBox="0 0 17 16">
                    <rect x=".5" y="1.500" width="14" height="13" fill="#b9d8ee" stroke="#6b9dc6" />
                    <circle cx="8" cy="8" r="6" fill="#f08418" stroke="#fff" strokeWidth=".6" />
                    <path d="M6 4.500L11.500 8L6 11.500Z" fill="#fff" />
                </svg>
            </TaskButton>
            <TaskButton $state="open">
                <ChromeMark size={16} />
            </TaskButton>
            <TaskButton>
                <svg width="17" height="16" viewBox="0 0 17 16">
                    <circle cx="8.500" cy="8" r="8" fill="#1673c4" />
                    <path d="M.7 7Q2 0 9 0Q16 1 16.500 7Q16 11 10.500 10Q12 8 10 6Q6 3 .7 7Z" fill="#3bc2a9" />
                    <path d="M9 6Q6 8 8 11Q11 14 15.500 12L16.500 8Q15 11 10.500 10.300Q12 8 9 6Z" fill="#d4d0c8" />
                    <path d="M.7 7Q5 3 9 6Q5 8 7 15.500Q0 13 .7 7Z" fill="#2894df" />
                </svg>
            </TaskButton>
            <TaskButton $state="active">
                <Books size={16} />
            </TaskButton>
            <TaskButton $state="open">
                <svg width="17" height="14" viewBox="0 0 17 14">
                    <rect x=".5" y=".5" width="15" height="12" fill="#f3f3f3" stroke="#a5a5a5" />
                    <rect x="3" y="3" width="7" height="8" fill="#3c8a88" />
                    <rect x="11" y="3" width="3" height="8" fill="#cacaca" />
                </svg>
            </TaskButton>
            <Tray>
                <svg width="8" height="11" viewBox="0 0 8 11">
                    <path d="M1 4L4 1L7 4M1 8.500L4 5.500L7 8.500" fill="none" stroke="#000" strokeWidth="1.500" />
                </svg>
                <svg width="32" height="16" viewBox="0 0 32 16">
                    <path d="M10 5.500H12L16 1.500V14.500L12 10.500H10Z" fill="#fff" stroke="#707070" />
                    <path d="M18.500 5Q20 8 18.500 11M20.500 3Q23 8 20.500 13M22.500 1.500Q26 8 22.500 14.500" fill="none" stroke="#8a8a8a" />
                </svg>
                <svg width="22" height="16" viewBox="0 0 22 16">
                    <rect x="5.500" y="3.500" width="10" height="9" fill="#c8c8c8" stroke="#606060" />
                    <path d="M10.500 12V14M6 14.500H15" stroke="#606060" />
                    <path d="M1.500 1V5.500H5.500V1M3.500 1V3M3.500 6V13.500H7" fill="none" stroke="#505050" />
                </svg>
                <svg width="20" height="16" viewBox="0 0 20 16">
                    <path d="M3.500 1V15" stroke="#606060" strokeWidth="1.500" />
                    <path d="M4.500 2.500H10.500V4.500H17.500L15.500 7L17 9.500H10.500V8.500H4.500Z" fill="#fff" stroke="#707070" />
                </svg>
                <Clock>6:51 AM</Clock>
                <svg width="15" height="13" viewBox="0 0 15 13">
                    <rect x=".5" y=".5" width="14" height="10" fill="#2566c5" stroke="#1c4680" />
                    <path d="M1 1H14L1 8Z" fill="#5f9be8" />
                    <path d="M4 12H11" stroke="#55708c" strokeWidth="1.500" />
                </svg>
            </Tray>
        </Taskbar>
    );
}

function App() {
    return (
        <Desktop>
            <GlobalStyle />
            <Rays width="1280" height="720" viewBox="0 0 1280 720">
                <path d="M44 692Q80 672 124 657" stroke="#bdf0ff" strokeWidth="2.500" opacity=".8" fill="none" />
                <path d="M86 692Q104 668 124 656" stroke="#9fe8ff" strokeWidth="1.500" opacity=".8" fill="none" />
                <path d="M117 692L124 684" stroke="#7ee087" strokeWidth="3" />
                <path d="M1186 56Q1220 24 1248 0" stroke="#4f86c0" strokeWidth="1.500" opacity=".3" fill="none" />
            </Rays>
            <IconGrid>
                {shortcuts.map((item) => (
                    <Shortcut key={`${item.col}-${item.row}`} $col={item.col} $row={item.row}>
                        {item.icon}
                        <ShortcutLabel $ls={item.ls}>{item.label}</ShortcutLabel>
                    </Shortcut>
                ))}
            </IconGrid>
            <Browser />
            <BlankWindow />
            <Archive />
            <Watermark width="210" height="70" viewBox="0 0 210 70" opacity=".55">
                <g fill="#cfcfcf" fontFamily="Roboto, sans-serif" fontSize="51" fontWeight="500">
                    <text x="3" y="53" textLength="62" lengthAdjust="spacingAndGlyphs">
                        ANY
                    </text>
                    <text x="134" y="53" textLength="62" lengthAdjust="spacingAndGlyphs">
                        RUN
                    </text>
                </g>
                <g fill="none" stroke="#cfcfcf" strokeWidth="4" strokeLinejoin="round" strokeLinecap="round">
                    <path d="M86 44V8L88 7L125 27Q127.500 30 125 31.500L122 30.500" />
                    <path d="M91 19L126 38.500L89 63.500Q86 64 85.500 61" />
                    <path d="M80.500 12.500Q76.500 12 76.500 16V57L78 57.500L112 37.500" />
                </g>
            </Watermark>
            <BuildInfo>
                <b>Test Mode</b>
                <b>Windows 7</b>
                <span>Build 7601</span>
            </BuildInfo>
            <Bar />
        </Desktop>
    );
}

export default App;
